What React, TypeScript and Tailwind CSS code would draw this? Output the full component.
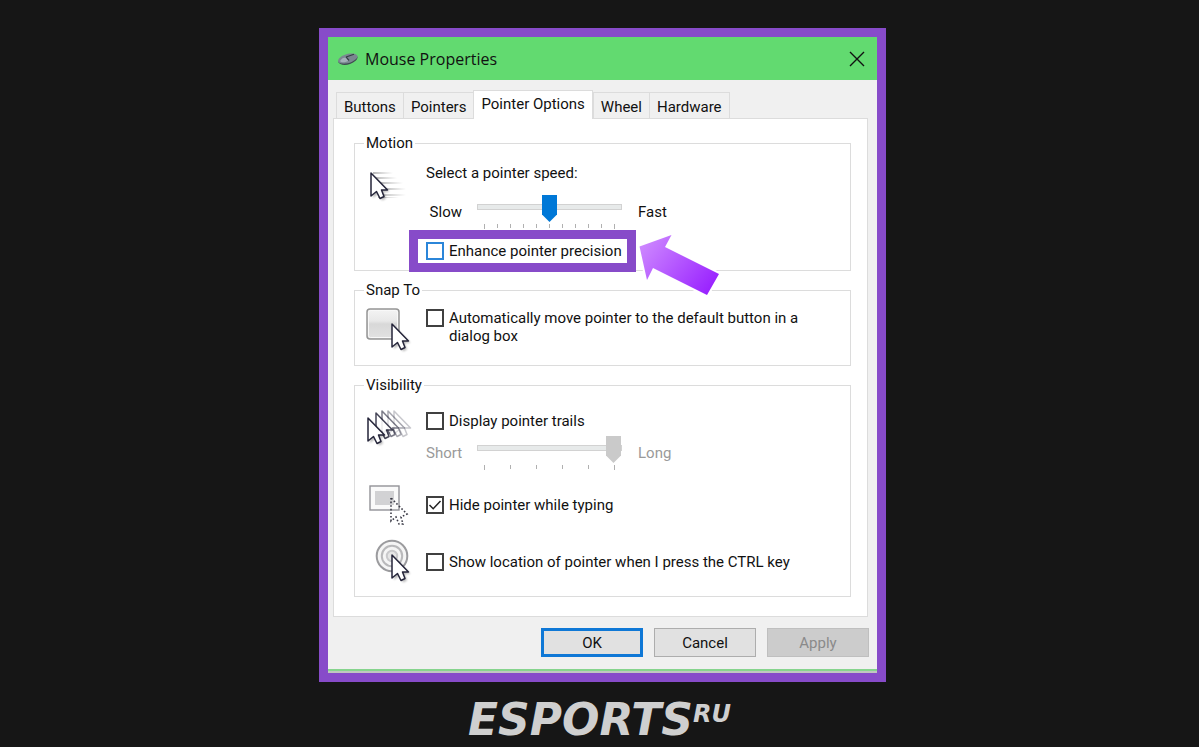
import { useState, type ReactNode } from "react";

const TABS = ["Buttons", "Pointers", "Pointer Options", "Wheel", "Hardware"];

const CURSOR = "M0 0V23L5.5 18.5L9 25.5L13 23.5L10.5 17H16.5Z";

function Cursor({ x, y, opacity = 1 }: { x: number; y: number; opacity?: number }) {
  return (
    <g transform={`translate(${x} ${y})`} opacity={opacity}>
      <path d={CURSOR} fill="#fff" stroke="#25253a" strokeWidth="1.5" strokeLinejoin="round" />
    </g>
  );
}

function CursorShadow({ x, y }: { x: number; y: number }) {
  return (
    <path
      d={CURSOR}
      transform={`translate(${x + 2} ${y + 2})`}
      fill="#000"
      opacity="0.28"
      className="blur-[1px]"
    />
  );
}

function SpeedIcon() {
  return (
    <svg viewBox="0 0 44 44" className="size-11" aria-hidden="true">
      <defs>
        <linearGradient id="streak" x1="0" x2="1">
          <stop offset="0" stopColor="#888" stopOpacity="0.6" />
          <stop offset="1" stopColor="#999" stopOpacity="0" />
        </linearGradient>
      </defs>
      <g fill="url(#streak)">
        <rect x="7" y="10" width="20" height="2" />
        <rect x="9" y="15" width="22" height="2" />
        <rect x="14" y="20" width="23" height="2" />
        <rect x="18" y="26" width="22" height="2" />
        <rect x="14" y="32" width="26" height="2" />
        <rect x="12" y="35" width="21" height="1" />
      </g>
      <CursorShadow x={5} y={11} />
      <Cursor x={5} y={11} />
    </svg>
  );
}

function SnapIcon() {
  return (
    <svg viewBox="0 0 44 44" className="size-11 overflow-visible" aria-hidden="true">
      <defs>
        <linearGradient id="snap" x1="0" y1="0" x2="0" y2="1">
          <stop offset="0" stopColor="#f4f4f4" />
          <stop offset="0.4" stopColor="#e8e8e8" />
          <stop offset="0.5" stopColor="#d8d8d8" />
          <stop offset="1" stopColor="#e2e2e2" />
        </linearGradient>
      </defs>
      <rect x="1" y="0" width="32" height="30" rx="3" fill="url(#snap)" stroke="#959595" strokeWidth="1.5" />
      <rect x="2.5" y="1.5" width="29" height="27" rx="2" fill="none" stroke="#f8f8f8" />
      <CursorShadow x={26} y={15} />
      <Cursor x={26} y={15} />
    </svg>
  );
}

function TrailsIcon() {
  return (
    <svg viewBox="0 0 44 44" className="size-11 overflow-visible" aria-hidden="true">
      <Cursor x={28} y={7} opacity={0.25} />
      <Cursor x={22} y={7} opacity={0.4} />
      <Cursor x={16} y={7} opacity={0.6} />
      <Cursor x={10} y={9} opacity={0.85} />
      <CursorShadow x={2} y={14} />
      <Cursor x={2} y={14} />
    </svg>
  );
}

function HideIcon() {
  return (
    <svg viewBox="0 0 44 44" className="size-11" aria-hidden="true">
      <rect x="4" y="3" width="29" height="24" fill="#fafafa" stroke="#929297" strokeWidth="1.4" />
      <rect x="9" y="8" width="19" height="14" fill="#d2d2d4" />
      <path
        d="M25 15V38L30 34L33 41H37L35 34L41 31Z"
        fill="none"
        stroke="#3a3a46"
        strokeWidth="1.6"
        strokeDasharray="1.6 2"
      />
    </svg>
  );
}

function LocateIcon() {
  return (
    <svg viewBox="0 0 44 44" className="size-11 overflow-visible" aria-hidden="true">
      <circle cx="26" cy="16" r="15.3" fill="#f5f5f5" stroke="#9b9b9e" strokeWidth="2" />
      <circle cx="26" cy="16" r="10.2" fill="none" stroke="#b9b9bb" strokeWidth="2" />
      <circle cx="26" cy="16" r="5.2" fill="#e6e6e6" stroke="#c9c9cb" strokeWidth="2" />
      <CursorShadow x={26} y={15} />
      <Cursor x={26} y={15} />
    </svg>
  );
}

function MouseIcon() {
  return (
    <svg viewBox="0 0 20 14" className="h-3.5 w-5" aria-hidden="true">
      <path d="M0 9.5C1 13 7 13.8 12 12C16.5 10.2 20 7.4 19.5 4.5L10 5Z" fill="#3f4a50" />
      <path d="M0 8.8C0.5 5.5 6 2 12 1.5C17 1.2 19.8 2.6 19.5 4.8C18.5 7.8 13 11 8 11.6C4 12 0 11.2 0 8.8Z" fill="#7a8790" />
      <path d="M2 9C4 6 6 5 9 5.5L11 8.5C8 10.5 3 11 2 9Z" fill="#a4b0b9" />
      <path d="M8 5L16 2.2M11 8.5L8 4.8" stroke="#333d44" strokeWidth="1.2" fill="none" />
    </svg>
  );
}

type CheckProps = { id: string; checked?: boolean; blue?: boolean; children: ReactNode };

function Check({ id, checked = false, blue = false, children }: CheckProps) {
  return (
    <div className="flex items-start gap-[5px]">
      <span className="grid shrink-0">
        <input
          id={id}
          type="checkbox"
          defaultChecked={checked}
          className={`peer col-start-1 row-start-1 size-[18px] appearance-none border-2 bg-white ${
            blue ? "border-[#2b86d9]" : "border-[#404040]"
          }`}
        />
        <svg
          viewBox="0 0 18 18"
          className="pointer-events-none invisible col-start-1 row-start-1 size-[18px] peer-checked:visible"
          aria-hidden="true"
        >
          <path d="M3.5 9L7.2 12.7L14.5 5" fill="none" stroke="#222" strokeWidth="1.5" />
        </svg>
      </span>
      <label htmlFor={id} className="max-w-[370px]">
        {children}
      </label>
    </div>
  );
}

type SliderProps = {
  label: string;
  from: string;
  to: string;
  max: number;
  value: number;
  disabled?: boolean;
};

function Slider({ label, from, to, max, value, disabled = false }: SliderProps) {
  return (
    <div className={`flex h-[34px] items-center ${disabled ? "text-[#9a9a9a]" : ""}`}>
      <span className="w-9 text-right">{from}</span>
      <div className="mr-4 ml-[15px] w-[145px] self-start">
        <input
          type="range"
          aria-label={label}
          min={0}
          max={max}
          defaultValue={value}
          disabled={disabled}
          className="block h-6 w-full appearance-none bg-transparent [&::-webkit-slider-runnable-track]:h-1.5 [&::-webkit-slider-runnable-track]:border [&::-webkit-slider-runnable-track]:border-[#d2d2d2] [&::-webkit-slider-runnable-track]:bg-[#e7eaea] [&::-webkit-slider-thumb]:-mt-[10px] [&::-webkit-slider-thumb]:h-[27px] [&::-webkit-slider-thumb]:w-[15px] [&::-webkit-slider-thumb]:appearance-none [&::-webkit-slider-thumb]:bg-[#0078d7] [&::-webkit-slider-thumb]:[clip-path:polygon(0_0,100%_0,100%_72%,50%_100%,0_72%)] disabled:[&::-webkit-slider-thumb]:bg-[#cacaca]"
        />
        <div className="mt-[5px] flex justify-between px-[7px]">
          {Array.from({ length: max + 1 }, (_, i) => (
            <span
              key={i}
              className={`w-px bg-[#b0b0b0] ${i === 0 || i === max ? "h-[5px]" : "h-1"}`}
            />
          ))}
        </div>
      </div>
      <span>{to}</span>
    </div>
  );
}

function Group({ title, className, children }: { title: string; className: string; children: ReactNode }) {
  return (
    <fieldset className={`border border-[#dcdcdc] pt-2.5 pl-[11px] ${className}`}>
      <legend className="-ml-0.5 px-0.5">{title}</legend>
      {children}
    </fieldset>
  );
}

function Arrow() {
  return (
    <svg
      viewBox="0 0 84 64"
      className="pointer-events-none absolute -top-1 left-full ml-2.5 h-16 w-[84px] overflow-visible"
      aria-hidden="true"
    >
      <defs>
        <linearGradient id="arrow" x1="0" y1="0.2" x2="1" y2="0.8">
          <stop offset="0" stopColor="#cd87ff" />
          <stop offset="1" stopColor="#9820ff" />
        </linearGradient>
      </defs>
      <path
        d="M2.5 11.5L34.5 0L28 12L82 39L70 60L16 33L10 45Z"
        fill="url(#arrow)"
        stroke="#fff"
        strokeWidth="4"
        className="[paint-order:stroke]"
      />
    </svg>
  );
}

export default function App() {
  const [tab, setTab] = useState("Pointer Options");

  return (
    <div className="flex min-h-screen flex-col items-center bg-[#161616] pt-7 font-['Roboto','Liberation_Sans',sans-serif] text-[15px] leading-[18px] text-[#111]">
      <div className="flex w-full justify-center pl-1.5">
        <main className="w-full max-w-[567px] border-9 border-[#874bc9] bg-[#f0f0f0]">
          <header className="flex h-[43px] items-center bg-[#62da70] pr-3 pl-2.5">
            <MouseIcon />
            <h1 className="ml-[7px] flex-1 font-['Open_Sans',sans-serif] text-base">Mouse Properties</h1>
            <button type="button" aria-label="Close">
              <svg viewBox="0 0 16 16" className="size-4" aria-hidden="true">
                <path d="M1 1L15 15M15 1L1 15" stroke="#111" strokeWidth="1.4" fill="none" />
              </svg>
            </button>
          </header>

          <div className="pt-2.5 pr-[9px] pl-[5px]">
            <div role="tablist" className="flex items-end pl-[3px]">
              {TABS.map((t) => (
                <button
                  key={t}
                  type="button"
                  role="tab"
                  aria-selected={t === tab}
                  onClick={() => setTab(t)}
                  className={
                    t === tab
                      ? "relative -mb-px h-[29px] border-x border-t border-[#dcdcdc] bg-white px-[7px] pb-0.5"
                      : "h-[26px] border-t border-l border-[#dcdcdc] px-[7px] pt-0.5 last:border-r"
                  }
                >
                  {t}
                </button>
              ))}
            </div>

            <section className="flex flex-col gap-2.5 border border-[#dcdcdc] bg-white pt-[15px] pr-4 pb-[19px] pl-5">
              <Group title="Motion" className="pb-2.5">
                <div className="flex gap-4">
                  <SpeedIcon />
                  <div className="flex flex-col gap-[13px] pt-0.5">
                    <p>Select a pointer speed:</p>
                    <Slider label="Pointer speed" from="Slow" to="Fast" max={10} value={5} />
                    <div className="relative w-[193px] whitespace-nowrap">
                      <Check id="precision" blue>
                        Enhance pointer precision
                      </Check>
                      <div className="pointer-events-none absolute -inset-x-[17px] -inset-y-[12px] border-9 border-[#874bc9]">
                        <Arrow />
                      </div>
                    </div>
                  </div>
                </div>
              </Group>

              <Group title="Snap To" className="pb-3">
                <div className="flex gap-4">
                  <SnapIcon />
                  <div className="flex-1">
                    <Check id="snap-to">
                      Automatically move pointer to the default button in a dialog box
                    </Check>
                  </div>
                </div>
              </Group>

              <Group title="Visibility" className="pb-3">
                <div className="flex flex-col gap-[13px]">
                  <div className="flex gap-4">
                    <TrailsIcon />
                    <div className="flex flex-col gap-1.5 pt-2">
                      <Check id="trails">Display pointer trails</Check>
                      <Slider label="Trail length" from="Short" to="Long" max={5} value={5} disabled />
                    </div>
                  </div>
                  <div className="flex items-center gap-4">
                    <HideIcon />
                    <Check id="hide" checked>
                      Hide pointer while typing
                    </Check>
                  </div>
                  <div className="flex items-center gap-4">
                    <LocateIcon />
                    <Check id="locate">Show location of pointer when I press the CTRL key</Check>
                  </div>
                </div>
              </Group>
            </section>
          </div>

          <footer className="flex justify-end gap-[11px] pt-[11px] pr-2 pb-3">
            <button type="button" className="h-[29px] w-[102px] border-3 border-[#0f78d6] bg-[#e1e1e1]">
              OK
            </button>
            <button type="button" className="h-[29px] w-[102px] border border-[#adadad] bg-[#e1e1e1]">
              Cancel
            </button>
            <button
              type="button"
              disabled
              className="h-[29px] w-[102px] border border-[#bfbfbf] bg-[#cccccc] text-[#8a8a8a]"
            >
              Apply
            </button>
          </footer>
          <div className="h-1 border-t-2 border-[#86d48d] bg-[#c0c6c0]" />
        </main>
      </div>

      {/* brand */}
      <div className="mt-4 flex items-start font-['DejaVu_Sans',sans-serif] font-bold text-[#cfcfcf] italic">
        <span className="text-[44px] leading-11">ESPORTS</span>
        <span className="mt-1 text-2xl leading-6">RU</span>
      </div>
    </div>
  );
}
